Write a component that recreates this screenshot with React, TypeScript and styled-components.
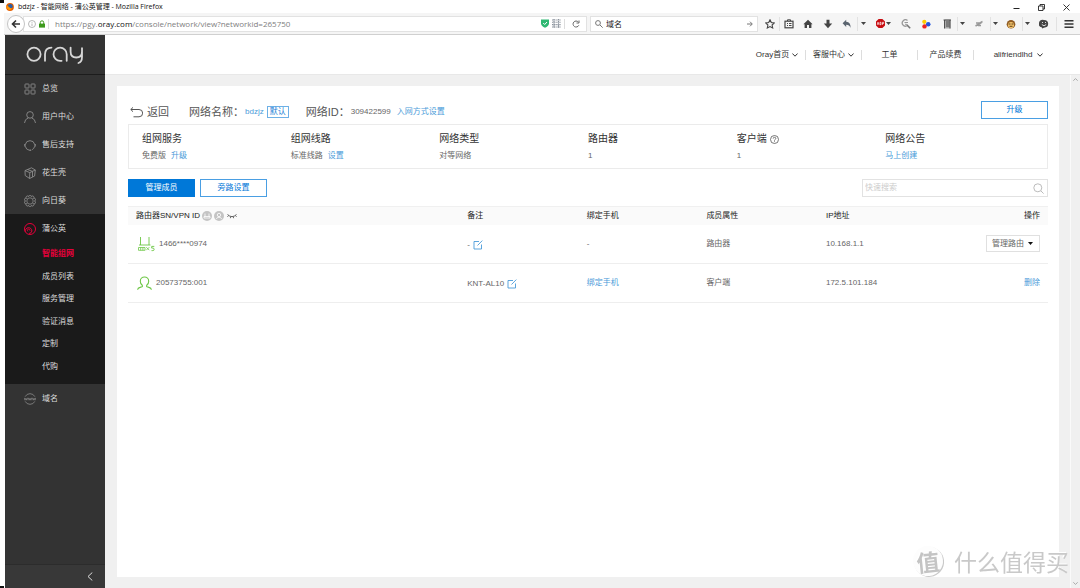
import React from 'react';
import styled, { createGlobalStyle, css } from 'styled-components';

const ui = `"Open Sans", "Noto Sans CJK SC", sans-serif`;
const page = `"Liberation Sans", "Noto Sans CJK SC", sans-serif`;

const GlobalStyle = createGlobalStyle`
  * { box-sizing: border-box; }
  body { margin: 0; background: #fff; font-family: ${page}; font-size: 8px; line-height: 12px; color: #666; }
  button, input, select { font: inherit; color: inherit; margin: 0; padding: 0; border: 0; background: none; border-radius: 0; }
  button { cursor: pointer; }
  a { color: #4a9bd9; text-decoration: none; }
  svg { display: block; flex: none; fill: none; }
  ul, dl, dd, h1, h2 { margin: 0; padding: 0; list-style: none; font: inherit; }
`;

const Window = styled.div`
  min-height: 100vh;
  display: flex;
  flex-direction: column;
  padding-left: 4px;
  position: relative;
`;

const Corner = styled.i<{ $end?: boolean }>`
  position: absolute;
  left: 0;
  width: 4px;
  height: ${(p) => (p.$end ? 2 : 3)}px;
  background: #111;
  ${(p) => (p.$end ? 'bottom: 0;' : 'top: 0;')}
`;

/* browser chrome */
const TitleBar = styled.header`
  height: 13px;
  display: flex;
  align-items: center;
  gap: 4px;
  padding: 0 10px 0 2px;
  font: 7px/12px ${ui};
  color: #111;
`;
const WindowButtons = styled.div`
  margin-left: auto;
  display: flex;
  gap: 18px;
  padding-top: 2px;
  button { display: block; }
`;
const ToolBar = styled.div`
  height: 22px;
  display: flex;
  align-items: center;
  background: #f5f5f5;
  border-bottom: 1px solid #d0d0d0;
  font: 8px/12px ${ui};
`;
const BackButton = styled.button`
  width: 18px;
  height: 18px;
  display: grid;
  place-items: center;
  margin: 0 -2px 0 3px;
  border: 1px solid #c4c4c4;
  border-radius: 50%;
  background: #fff;
  z-index: 1;
`;
const FieldBox = styled.div<{ $width?: number }>`
  ${(p) => (p.$width ? css`flex: none; width: ${p.$width}px;` : css`flex: 1; min-width: 0;`)}
  height: 16px;
  display: flex;
  align-items: center;
  gap: 3px;
  padding: 0 4px;
  margin-right: 3px;
  background: #fff;
  border: 1px solid #e2e2e2;
  white-space: nowrap;
  input { flex: 1; min-width: 0; color: #222; outline: 0; }
`;
const Address = styled.div`
  flex: 1;
  min-width: 0;
  overflow: hidden;
  padding-left: 3px;
  color: #808080;
  b { font-weight: 400; color: #111; }
`;
const Rule = styled.i`
  width: 1px;
  height: 10px;
  background: #ddd;
`;
const Tool = styled.button<{ $width: number; $line?: boolean }>`
  flex: none;
  width: ${(p) => p.$width}px;
  height: 14px;
  display: flex;
  align-items: center;
  justify-content: center;
  gap: 1px;
  color: #444;
  ${(p) => p.$line && 'border-left: 1px solid #e2e2e2;'}
`;

/* console frame */
const Frame = styled.div`
  flex: 1;
  display: flex;
  padding-left: 1px;
`;
const Sidebar = styled.aside`
  flex: none;
  width: 100px;
  display: flex;
  flex-direction: column;
  background: #333;
  color: #ddd;
`;
const Brand = styled.a`
  height: 40px;
  display: flex;
  align-items: center;
  padding-left: 21px;
  border-bottom: 1px solid #1c1c1c;
  color: #d6d6d6;
`;
const NavLink = styled.a`
  height: 28px;
  display: flex;
  align-items: center;
  gap: 6px;
  padding-left: 19px;
  color: #ddd;
  svg { color: #8c8c8c; }
`;
const NavGroup = styled.div`
  background: #1a1a1a;
  margin: -1px 0 1px;
  padding: 1px 0 6px;
`;
const SubList = styled.ul`
  height: 135px;
  display: flex;
  flex-direction: column;
  li { flex: 1; display: flex; align-items: center; padding-left: 37px; }
`;
const SubLink = styled.a<{ $active?: boolean }>`
  color: ${(p) => (p.$active ? '#e6003a' : '#ddd')};
  font-weight: ${(p) => (p.$active ? 700 : 400)};
`;
const Collapse = styled.button`
  margin-top: auto;
  height: 24px;
  display: flex;
  align-items: center;
  justify-content: flex-end;
  padding-right: 12px;
  background: #383838;
  border-top: 1px solid #2c2c2c;
  color: #ddd;
`;
const Main = styled.div`
  flex: 1;
  min-width: 0;
  display: flex;
  flex-direction: column;
`;
const TopNav = styled.nav`
  height: 39px;
  display: flex;
  align-items: center;
  justify-content: flex-end;
  padding-right: 17px;
  background: #fff;
`;
const TopLink = styled.a<{ $wide?: boolean }>`
  width: ${(p) => (p.$wide ? 90 : 56)}px;
  height: 10px;
  display: flex;
  align-items: center;
  justify-content: center;
  gap: ${(p) => (p.$wide ? 5 : 3)}px;
  color: #333;
  white-space: nowrap;
  & + & { border-left: 1px solid #ddd; }
`;
const Body = styled.div`
  flex: 1;
  display: flex;
  background: #f0f0f0;
  border-top: 1px solid #e8e8e8;
`;
const Card = styled.main`
  flex: 1;
  min-width: 0;
  margin: 11px 11px 11px 12px;
  padding: 15px 11px;
  background: #fff;
`;
const ScrollTrack = styled.div`
  width: 10px;
  display: flex;
  flex-direction: column;
  justify-content: space-between;
  align-items: center;
  padding: 3px 0;
  border-left: 1px solid #fafafa;
  color: #aaa;
`;

/* page content */
const Heading = styled.div`
  height: 18px;
  display: flex;
  align-items: center;
  margin-bottom: 5px;
  white-space: nowrap;
`;
const BackLink = styled.a`
  display: flex;
  align-items: center;
  gap: 4px;
  padding: 4px 0 0 2px;
  margin-right: 20px;
  font-size: 11px;
  line-height: 14px;
  color: #555;
`;
const Field = styled.div`
  display: flex;
  align-items: center;
  padding-top: 4px;
  margin-right: 17px;
`;
const FieldName = styled.span`
  width: 56px;
  font-size: 11px;
  line-height: 14px;
  color: #555;
`;
const FieldId = styled(FieldName)`
  width: 45px;
`;
const Tag = styled.span`
  height: 12px;
  padding: 0 2px;
  margin-left: 3px;
  border: 1px solid #6db0e6;
  color: #1b7fd6;
  line-height: 10px;
`;
const Button = styled.button<{ $primary?: boolean }>`
  width: 67px;
  height: 18px;
  border: 1px solid ${(p) => (p.$primary ? '#0078d8' : '#4a9fe3')};
  background: ${(p) => (p.$primary ? '#0078d8' : '#fff')};
  color: ${(p) => (p.$primary ? '#fff' : '#0078d8')};
`;
const Push = styled.div`
  margin-left: auto;
  display: flex;
`;
const Summary = styled.dl`
  display: grid;
  grid-template-columns: repeat(6, 1fr);
  height: 45px;
  padding: 6px 13px 0;
  border: 1px solid #ebebeb;
  dt { display: flex; align-items: center; gap: 3px; font-size: 10px; line-height: 16px; color: #333; }
  dd { display: flex; gap: 5px; padding-top: 3px; }
`;
const Actions = styled.div`
  display: flex;
  gap: 5px;
  margin: 10px 0 9px;
`;
const Search = styled.label`
  width: 186px;
  height: 18px;
  display: flex;
  align-items: center;
  padding: 0 3px 0 2px;
  border: 1px solid #e2e2e2;
  color: #bbb;
  input { flex: 1; min-width: 0; outline: 0; }
  input::placeholder { color: #ccc; opacity: 1; }
`;
const Members = styled.table`
  width: 100%;
  table-layout: fixed;
  border-collapse: collapse;
  th, td { padding: 0 8px; text-align: left; vertical-align: middle; font-weight: 400; }
  th { height: 18px; background: #fafafa; border-top: 1px solid #f0f0f0; color: #222; }
  td { height: 39px; border-bottom: 1px solid #eee; }
`;
const Col = styled.col<{ $share: number }>`
  width: ${(p) => p.$share}%;
`;
const Line = styled.div<{ $gap?: number }>`
  display: flex;
  align-items: center;
  gap: ${(p) => p.$gap ?? 4}px;
`;
const Note = styled(Line)`
  gap: 3px;
  padding-top: 2px;
`;
const Select = styled.span`
  display: inline-flex;
  align-items: center;
  width: 54px;
  height: 17px;
  position: relative;
  border: 1px solid #e0e0e0;
  select { appearance: none; width: 100%; height: 15px; padding-left: 5px; outline: 0; }
  svg { position: absolute; right: 6px; pointer-events: none; color: #111; }
`;
const Watermark = styled.div`
  position: fixed;
  right: 11px;
  bottom: 12px;
  display: flex;
  align-items: center;
  gap: 11px;
  color: #c9c9c9;
  font: 23px/30px "Noto Sans CJK SC", sans-serif;
  text-shadow: -1px -1px 0 #fff;
  pointer-events: none;
`;
const Seal = styled.span`
  width: 30px;
  height: 30px;
  display: grid;
  place-items: center;
  border-radius: 50%;
  background: #fdfdfd;
  box-shadow: 1px 1px 0 #c9c9c9;
  font-weight: 700;
  color: #c4c4c4;
  transform: rotate(-6deg);
`;

const Caret = () => (
  <svg width="5" height="3" viewBox="0 0 5 3"><path d="M0 0h5L2.5 3z" fill="currentColor" /></svg>
);
const Chevron = () => (
  <svg width="6" height="4" viewBox="0 0 6 4" stroke="#333"><path d="M.4.5 3 3.2 5.6.5" /></svg>
);

const Logo = () => (
  <svg width="58" height="20" viewBox="0 0 58 20" stroke="currentColor" strokeWidth="1.8" strokeLinecap="round">
    <circle cx="8" cy="9.200" r="6.600" />
    <path d="M19 15.800V9.500q0-6.800 6.500-6.900" />
    <path d="M40.700 15.800V9.200a6.600 6.600 0 1 0-6.600 6.600h1.500" />
    <path d="M44.600 2.600v4.200q0 5.700 5.700 5.700t5.700-5.700V2.600V12q0 5-3.600 6" />
  </svg>
);

const navIcon = { width: 12, height: 12, viewBox: '0 0 12 12', stroke: 'currentColor', strokeWidth: 0.9 };
const GridIcon = () => (
  <svg {...navIcon}><rect x="1" y="1" width="4" height="4" rx=".6" /><rect x="7" y="1" width="4" height="4" rx=".6" /><rect x="1" y="7" width="4" height="4" rx=".6" /><rect x="7" y="7" width="4" height="4" rx=".6" /></svg>
);
const UserIcon = () => (
  <svg {...navIcon}><circle cx="6" cy="3.900" r="3.300" /><path d="M.5 12Q.8 8 4.300 6.900M11.500 12Q11.200 8 7.700 6.900" /></svg>
);
const SupportIcon = () => (
  <svg {...navIcon}><path d="M1.300 5.500a4.800 4.800 0 0 1 9.400 0M1.300 7.300A5 5 0 0 0 5.500 11.300M10.700 7.300Q10 9.800 8.200 10.700" /><path d="M.9 5v2.600M11.100 5v2.600" strokeWidth="1.300" /><path d="M5.400 11.200h1.800" strokeWidth="1.300" /></svg>
);
const CubeIcon = () => (
  <svg {...navIcon}><path d="M1 3.600 7.500.8 11.300 3 10.600 9 5.600 11.500 1.200 8.500zM1 3.600l4.800 2L11.300 3M5.800 5.600l-.2 5.900M3.500 2.500 8.500 4.400v5.500" /></svg>
);
const SunIcon = () => (
  <svg {...navIcon} strokeWidth=".8">
    <circle cx="6" cy="6" r="3.200" />
    {Array.from({ length: 10 }, (_, i) => (
      <path key={i} d="M4.700 1.900V1.200a1.300 1 0 0 1 2.600 0v.7" transform={`rotate(${i * 36} 6 6)`} />
    ))}
  </svg>
);
const DandelionIcon = () => (
  <svg {...navIcon} stroke="#e6003a" strokeWidth="1"><circle cx="6" cy="6" r="5.500" /><path d="M1.400 8.800A3.300 3.300 0 1 1 7.900 8Q7.600 10.300 5 10.500" /><path d="M3.800 8.300a1.300 1.300 0 1 1 2.200-.7" /></svg>
);
const DomainIcon = () => (
  <svg {...navIcon} strokeWidth=".8"><path d="M1.200 3.600a5.400 5.400 0 0 1 9.600 0M1.200 8.400a5.400 5.400 0 0 0 9.600 0" /><path d="M.2 4.800l.8 2.400.9-2 .9 2 .8-2.400M4.300 4.800l.8 2.400.9-2 .9 2 .8-2.400M8.400 4.800l.8 2.400.9-2 .9 2 .8-2.400" strokeWidth=".7" /></svg>
);

const EditIcon = () => (
  <svg width="10" height="10" viewBox="0 0 10 10" stroke="#4a9bd9" strokeWidth=".9"><path d="M6 1.500H1v7.500h7.500V4.500M4.500 5.500 9.300.6" /></svg>
);
const MagnifierIcon = () => (
  <svg width="11" height="11" viewBox="0 0 11 11" stroke="currentColor"><circle cx="4.800" cy="4.800" r="4" /><path d="m7.800 7.800 2.800 2.800" /></svg>
);

const menu = [
  { name: '总览', icon: <GridIcon /> },
  { name: '用户中心', icon: <UserIcon /> },
  { name: '售后支持', icon: <SupportIcon /> },
  { name: '花生壳', icon: <CubeIcon /> },
  { name: '向日葵', icon: <SunIcon /> },
];
const submenu = ['智能组网', '成员列表', '服务管理', '验证消息', '定制', '代购'];

const tool = { width: 10, height: 10, viewBox: '0 0 10 10' };

function BrowserBar() {
  return (
    <>
      <TitleBar>
        <svg width="8" height="8" viewBox="0 0 8 8"><circle cx="4" cy="4" r="3.900" fill="#e66000" /><circle cx="4.300" cy="3.300" r="2.400" fill="#2a5fa8" /><path d="M.4 2.500Q2 2.500 3 4t3 1.300Q5 7.500 3 7 .3 6 .4 2.500" fill="#ff9500" /></svg>
        <span>bdzjz - 智能网络 - 蒲公英管理 - Mozilla Firefox</span>
        <WindowButtons>
          <button aria-label="最小化"><svg width="7" height="7" viewBox="0 0 7 7" stroke="#222"><path d="M.5 4.500h6" /></svg></button>
          <button aria-label="还原"><svg width="7" height="7" viewBox="0 0 7 7" stroke="#222" strokeWidth=".9"><path d="M.5 2h4.500v4.500H.5zM2 2V.5h4.500V5H5" /></svg></button>
          <button aria-label="关闭"><svg width="7" height="7" viewBox="0 0 7 7" stroke="#222" strokeWidth=".9"><path d="m.5.5 6 6m0-6-6 6" /></svg></button>
        </WindowButtons>
      </TitleBar>
      <ToolBar>
        <BackButton aria-label="后退"><svg {...tool} stroke="#333" strokeWidth="1.600"><path d="M9 5H2M5 1.500 1.500 5 5 8.500" /></svg></BackButton>
        <FieldBox>
          <svg width="8" height="8" viewBox="0 0 8 8" stroke="#999" strokeWidth=".7"><circle cx="4" cy="4" r="3.500" /><path d="M4 3.500V6M4 2v.8" /></svg>
          <svg width="6" height="8" viewBox="0 0 6 8"><path d="M1.300 4V2.500a1.700 1.700 0 0 1 3.400 0V4" stroke="#3d9a1c" strokeWidth="1" /><path d="M0 3.600h6v4H0z" fill="#3d9a1c" /></svg>
          <Rule />
          <Address role="textbox" aria-label="地址">https://pgy.<b>oray.com</b>/console/network/view?networkid=265750</Address>
          <svg width="8" height="9" viewBox="0 0 8 9"><path d="M0 .5h8v4Q7.500 7.500 4 8.800.5 7.500 0 4.500z" fill="#2eb872" /><path d="m2.200 4 1.500 1.500L6 3" stroke="#fff" /></svg>
          <svg width="9" height="9" viewBox="0 0 9 9" stroke="#8a929c" strokeWidth="1.100" strokeDasharray="1.400 .7"><path d="M0 1h9M0 3.300h9M0 5.600h9M0 8h9M2 0v9M6.500 0v9" /></svg>
          <Rule />
          <svg width="14" height="8" viewBox="-4 0 14 8" stroke="#666"><path d="M6.800 5.300A3 3 0 1 1 6.300 2M7 .5v2.500H4.500" /></svg>
        </FieldBox>
        <FieldBox $width={168}>
          <svg width="8" height="8" viewBox="0 0 8 8" stroke="#777"><circle cx="3" cy="3" r="2.400" /><path d="m5 5 2.700 2.700" /></svg>
          <input aria-label="搜索" defaultValue="域名" />
          <svg width="6" height="6" viewBox="0 0 6 6" stroke="#777"><path d="M0 3h5M3 .7 5.300 3 3 5.300" /></svg>
        </FieldBox>
        <Tool $width={18} aria-label="书签"><svg {...tool} stroke="#444" strokeWidth="1.100"><path d="m5 .8 1.300 2.700 3 .4-2.200 2.100.6 3L5 7.600 2.300 9l.6-3L.7 3.900l3-.4z" /></svg></Tool>
        <Tool $width={18} $line aria-label="书签列表"><svg {...tool} stroke="#444"><rect x="1" y="2.200" width="8" height="6.600" strokeWidth="1.200" /><path d="M3.500 2V.8h3V2M3 4.500h1m1 0h2.500M3 6.500h1m1 0h2.500" /></svg></Tool>
        <Tool $width={22} aria-label="主页"><svg {...tool}><path d="M5 .8 9.600 5.300H8.400V9H6V6H4v3H1.600V5.300H.4z" fill="#444" /></svg></Tool>
        <Tool $width={18} aria-label="下载"><svg {...tool}><path d="M3.500.8h3v3.700h2.700L5 9.200.8 4.500h2.700z" fill="#444" /></svg></Tool>
        <Tool $width={20} aria-label="撤销"><svg {...tool}><path d="M4.200.8v2Q9 3.200 8.500 9 7.500 5.800 4.200 5.800V8L.6 4.300z" fill="#5b6570" /></svg></Tool>
        <Tool $width={12} $line aria-label="撤销列表"><Caret /></Tool>
        <Tool $width={28} aria-label="广告拦截">
          <svg width="9" height="9" viewBox="0 0 9 9"><path d="M2.600 0h3.800L9 2.600v3.800L6.400 9H2.600L0 6.400V2.600z" fill="#c70d12" /><path d="M1.300 5.800 2 3.200l.8 2.600M4 5.800V3.300h1v2.400H4M6.500 5.900V3.300h1.200v1.200H6.500" stroke="#fff" strokeWidth=".7" /></svg>
          <Caret />
        </Tool>
        <Tool $width={18} aria-label="查找"><svg {...tool} stroke="#999"><path d="M6.500 1.500A3.200 3.200 0 1 0 6 6.800" strokeWidth="1.300" /><path d="M3.500 3.500h3.500M4 5.200l2.500.3" /><path d="m6 6 3.200 3.200" stroke="#777" strokeWidth="1.600" /></svg></Tool>
        <Tool $width={22} aria-label="取色"><svg {...tool}><circle cx="3.300" cy="2.800" r="2.100" fill="#fc0" /><circle cx="7.200" cy="5.300" r="2.300" fill="#2255e0" /><circle cx="3.500" cy="7.400" r="2.200" fill="#e22" /></svg></Tool>
        <Tool $width={20} aria-label="页面"><svg {...tool}><path d="M2.500.5h6v9h-6z" fill="#aaa" /><path d="M1.500 1h7.500M4 3h3.500M4 5h3.500M4 7h3.500M2.500 1v8.500M8 1v8.500" stroke="#444" strokeWidth=".9" /></svg></Tool>
        <Tool $width={10} $line aria-label="页面列表"><Caret /></Tool>
        <Tool $width={23} aria-label="工具"><svg {...tool} stroke="#999"><path d="m1.500 7 6-3.500M2 4h4L8.500 2.500M4 6.500h3" strokeWidth="1.500" /></svg></Tool>
        <Tool $width={10} $line aria-label="工具列表"><Caret /></Tool>
        <Tool $width={22} aria-label="脚本"><svg {...tool}><circle cx="5" cy="5.200" r="4.300" fill="#8f5a22" /><circle cx="5" cy="6" r="3.100" fill="#f2c26b" /><path d="M2.500 5h2m1 0h2M3.500 7.300h3" stroke="#3b2208" strokeWidth=".8" /></svg></Tool>
        <Tool $width={10} $line aria-label="脚本列表"><Caret /></Tool>
        <Tool $width={24} aria-label="聊天"><svg {...tool}><path d="M5 1a4 3.700 0 0 1 0 7.700L3 9.500v-1A4 3.700 0 0 1 5 1" fill="#444" /><path d="M3.500 3v1m3-1v1M2.800 5.500Q5 8.200 7.200 5.500" stroke="#fff" strokeWidth=".8" /></svg></Tool>
        <Tool $width={24} $line aria-label="菜单"><svg {...tool} stroke="#333" strokeWidth="1.500"><path d="M.5 1.700h9M.5 5h9M.5 8.300h9" /></svg></Tool>
      </ToolBar>
    </>
  );
}

export default function App() {
  return (
    <Window>
      <GlobalStyle />
      <Corner />
      <Corner $end />
      <BrowserBar />
      <Frame>
        <Sidebar>
          <Brand href="#" aria-label="oray"><Logo /></Brand>
          {menu.map((m) => (
            <NavLink href="#" key={m.name}>{m.icon}{m.name}</NavLink>
          ))}
          <NavGroup>
            <NavLink href="#"><DandelionIcon />蒲公英</NavLink>
            <SubList>
              {submenu.map((s, i) => (
                <li key={s}><SubLink href="#" $active={i === 0}>{s}</SubLink></li>
              ))}
            </SubList>
          </NavGroup>
          <NavLink href="#"><DomainIcon />域名</NavLink>
          <Collapse aria-label="收起">
            <svg width="6" height="9" viewBox="0 0 6 9" stroke="currentColor"><path d="M5.300.5 1 4.500l4.300 4" /></svg>
          </Collapse>
        </Sidebar>
        <Main>
          <TopNav>
            <TopLink href="#">Oray首页<Chevron /></TopLink>
            <TopLink href="#">客服中心<Chevron /></TopLink>
            <TopLink href="#">工单</TopLink>
            <TopLink href="#">产品续费</TopLink>
            <TopLink href="#" $wide>alifriendlhd<Chevron /></TopLink>
          </TopNav>
          <Body>
            <Card>
              <Heading>
                <BackLink href="#">
                  <svg width="13" height="11" viewBox="0 0 13 11" stroke="#555"><path d="M.8 2.500H9a3.500 3.500 0 0 1 0 7.300H3.500M3 .4.8 2.500 3 4.700" /></svg>
                  返回
                </BackLink>
                <Field>
                  <FieldName>网络名称：</FieldName>
                  <a href="#">bdzjz</a>
                  <Tag>默认</Tag>
                </Field>
                <Field>
                  <FieldId>网络ID：</FieldId>
                  <Line $gap={6}>309422599<a href="#">入网方式设置</a></Line>
                </Field>
                <Push><Button>升级</Button></Push>
              </Heading>
              <Summary>
                <div><dt>组网服务</dt><dd>免费版<a href="#">升级</a></dd></div>
                <div><dt>组网线路</dt><dd>标准线路<a href="#">设置</a></dd></div>
                <div><dt>网络类型</dt><dd>对等网络</dd></div>
                <div><dt>路由器</dt><dd>1</dd></div>
                <div>
                  <dt>
                    客户端
                    <svg width="9" height="9" viewBox="0 0 9 9" stroke="#555" strokeWidth=".8"><circle cx="4.500" cy="4.500" r="4" /><path d="M3.200 3.600q0-1.300 1.300-1.300t1.300 1.200q0 .8-1.300 1.500v.6M4.500 6.300v.8" /></svg>
                  </dt>
                  <dd>1</dd>
                </div>
                <div><dt>网络公告</dt><dd><a href="#">马上创建</a></dd></div>
              </Summary>
              <Actions>
                <Button $primary>管理成员</Button>
                <Button>旁路设置</Button>
                <Push>
                  <Search><input aria-label="快速搜索" placeholder="快速搜索" /><MagnifierIcon /></Search>
                </Push>
              </Actions>
              <Members>
                <colgroup>
                  <Col $share={36} /><Col $share={13} /><Col $share={13} /><Col $share={13} /><Col $share={25} />
                </colgroup>
                <thead>
                  <tr>
                    <th>
                      <Line $gap={2}>
                        路由器SN/VPN ID
                        <svg width="10" height="10" viewBox="0 0 10 10"><circle cx="5" cy="5" r="5" fill="#c4c4c4" /><path d="M3 2.500v3m4-3v3M2 5.500h6V7H2z" stroke="#fff" strokeWidth=".8" /></svg>
                        <svg width="10" height="10" viewBox="0 0 10 10"><circle cx="5" cy="5" r="5" fill="#c4c4c4" /><circle cx="5" cy="4" r="1.700" stroke="#fff" strokeWidth=".8" /><path d="M2.300 8Q3 6.200 5 6.200T7.700 8" stroke="#fff" strokeWidth=".8" /></svg>
                        <svg width="12" height="6" viewBox="0 0 12 6" stroke="#555" strokeWidth=".9"><path d="M1.500 1.500Q6 5.800 10.500 1.500M2.500 2.500l-1 1.300M4.800 3.600l-.4 1.600M7.200 3.600l.4 1.600M9.500 2.500l1 1.300" /></svg>
                      </Line>
                    </th>
                    <th>备注</th>
                    <th>绑定手机</th>
                    <th>成员属性</th>
                    <th><Line><span>IP地址</span><Push>操作</Push></Line></th>
                  </tr>
                </thead>
                <tbody>
                  <tr>
                    <td>
                      <Line>
                        <svg width="19" height="16" viewBox="-2 0 19 16" stroke="#6cc644" strokeWidth=".9"><path d="M2.500 1v8M11 1v8M1 9h11.500" /><path d="M.5 11.500h6.500v2.800h-6.500zM2.700 11.500v2.800M4.900 11.500v2.800M8.300 11.200l3 3m0-3-3 3" strokeWidth=".8" /><path d="M16.300 10.400h-2.600v1.700h1.200a1.200 1.200 0 0 1 0 2.500h-1.400" /></svg>
                        1466****0974
                      </Line>
                    </td>
                    <td><Note>-<EditIcon /></Note></td>
                    <td>-</td>
                    <td>路由器</td>
                    <td>
                      <Line>
                        <span>10.168.1.1</span>
                        <Push>
                          <Select>
                            <select aria-label="操作"><option>管理路由</option></select>
                            <Caret />
                          </Select>
                        </Push>
                      </Line>
                    </td>
                  </tr>
                  <tr>
                    <td>
                      <Line>
                        <svg width="16" height="15" viewBox="-1 0 16 15" stroke="#6cc644" strokeWidth="1.100"><path d="M.6 13.800Q.8 12 3 11.400L5.300 10.700V9.300Q3.300 8 3.300 5.200A4.200 4.200 0 0 1 11.700 5.200Q11.700 8 9.700 9.300V10.700L12 11.400Q14.200 12 14.400 13.800" /></svg>
                        20573755:001
                      </Line>
                    </td>
                    <td><Note>KNT-AL10<EditIcon /></Note></td>
                    <td><a href="#">绑定手机</a></td>
                    <td>客户端</td>
                    <td><Line><span>172.5.101.184</span><Push><a href="#">删除</a></Push></Line></td>
                  </tr>
                </tbody>
              </Members>
            </Card>
            <ScrollTrack>
              <svg width="5" height="3" viewBox="0 0 5 3" stroke="currentColor"><path d="M.3 2.700 2.500.6l2.200 2.100" /></svg>
              <svg width="5" height="3" viewBox="0 0 5 3" stroke="currentColor"><path d="M.3.3 2.500 2.400 4.700.3" /></svg>
            </ScrollTrack>
          </Body>
        </Main>
      </Frame>
      <Watermark><Seal>值</Seal>什么值得买</Watermark>
    </Window>
  );
}
